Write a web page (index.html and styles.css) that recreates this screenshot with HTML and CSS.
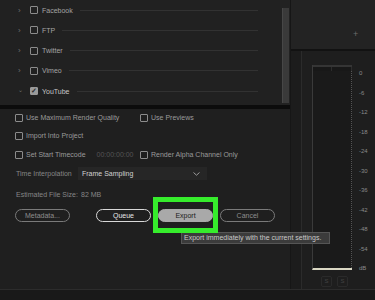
FILE: index.html
```html
<!DOCTYPE html>
<html lang="en">
<head>
    <meta charset="UTF-8">
    <meta name="viewport" content="width=device-width, initial-scale=1.0">
    <title>Export Settings</title>
    <link rel="stylesheet" href="styles.css">
</head>
<body>
    <div class="app">
        <div class="main">
            <!-- Publish destinations -->
            <div class="destinations">
                <ul class="tree">
                    <li class="tree-row"><span class="chev">&#8250;</span><span class="box"></span><span class="name">Facebook</span><span class="rule"></span></li>
                    <li class="tree-row"><span class="chev">&#8250;</span><span class="box"></span><span class="name">FTP</span><span class="rule"></span></li>
                    <li class="tree-row"><span class="chev">&#8250;</span><span class="box"></span><span class="name">Twitter</span><span class="rule"></span></li>
                    <li class="tree-row"><span class="chev">&#8250;</span><span class="box"></span><span class="name">Vimeo</span><span class="rule"></span></li>
                    <li class="tree-row open"><span class="chev">&#8964;</span><span class="box checked">&#10003;</span><span class="name">YouTube</span><span class="rule"></span></li>
                </ul>
                <div class="scrollbar"><div class="thumb"></div></div>
            </div>

            <div class="divider"></div>

            <!-- Render options -->
            <div class="settings">
                <div class="opt-row r1">
                    <label class="opt"><span class="box"></span>Use Maximum Render Quality</label>
                    <label class="opt"><span class="box"></span>Use Previews</label>
                </div>
                <div class="opt-row r2">
                    <label class="opt"><span class="box"></span>Import Into Project</label>
                </div>
                <div class="opt-row r3">
                    <label class="opt"><span class="box"></span>Set Start Timecode <span class="timecode">00:00:00:00</span></label>
                    <label class="opt"><span class="box"></span>Render Alpha Channel Only</label>
                </div>
                <div class="opt-row r4">
                    <span class="dim">Time Interpolation</span>
                    <div class="select">
                        <span>Frame Sampling</span>
                        <svg width="7" height="4" viewBox="0 0 7 4"><path d="M0.5 0.5 L3.5 3.2 L6.5 0.5" fill="none" stroke="#9a9a9a" stroke-width="1"/></svg>
                    </div>
                </div>
                <div class="opt-row r5">
                    <span class="dim">Estimated File Size:</span>
                    <span class="dim size">82 MB</span>
                </div>

                <div class="actions">
                    <button class="btn muted">Metadata...</button>
                    <button class="btn queue">Queue</button>
                    <div class="export-wrap">
                        <button class="btn export">Export</button>
                        <div class="highlight"></div>
                        <div class="tooltip">Export immediately with the current settings.</div>
                    </div>
                    <button class="btn muted">Cancel</button>
                </div>
            </div>
        </div>

        <!-- Audio meter side panel -->
        <div class="side">
            <div class="side-top"><span class="plus">+</span></div>
            <div class="side-meter">
                <div class="strip"></div>
                <div class="meter-col">
                    <div class="meter">
                        <div class="meter-head"><span></span><span></span></div>
                        <div class="meter-body"></div>
                    </div>
                    <div class="solo">
                        <span>S</span><span>S</span>
                    </div>
                </div>
                <div class="scale">
                    <span>0</span>
                    <span>-6</span>
                    <span>-12</span>
                    <span>-18</span>
                    <span>-24</span>
                    <span>-30</span>
                    <span>-36</span>
                    <span>-42</span>
                    <span>-48</span>
                    <span>-54</span>
                    <span>dB</span>
                </div>
            </div>
        </div>
    </div>
    <div class="footer"></div>
</body>
</html>
```

FILE: styles.css
```css
* {
    box-sizing: border-box;
}

body {
    margin: 0;
    width: 375px;
    height: 300px;
    overflow: hidden;
    background: #1f1f1f;
    font-family: 'Liberation Sans', Arial, sans-serif;
    font-size: 7px;
    color: #9c9c9c;
}

.app {
    display: flex;
    height: 289px;
}

.main {
    width: 290px;
    display: flex;
    flex-direction: column;
}

/* Destination tree */
.destinations {
    height: 105px;
    display: flex;
    background: #212121;
}

.tree {
    list-style: none;
    margin: 0;
    padding: 0;
    flex: 1;
}

.tree-row {
    height: 20.25px;
    display: flex;
    align-items: center;
}

.chev {
    width: 30px;
    padding-left: 18px;
    color: #6f6f6f;
    font-size: 8px;
}

.tree-row.open .chev {
    padding-left: 18px;
    font-size: 6px;
    margin-top: -3px;
}

.box {
    width: 8px;
    height: 8px;
    border: 1px solid #8c8c8c;
    border-radius: 1px;
    margin-right: 4px;
    flex: none;
    display: inline-flex;
    align-items: center;
    justify-content: center;
}

.box.checked {
    background: #9a9a9a;
    border-color: #9a9a9a;
    color: #2a2a2a;
    font-size: 7px;
    font-weight: bold;
}

.name {
    color: #a3a3a3;
}

.open .name {
    color: #c6c6c6;
}

.rule {
    flex: 1;
    height: 1px;
    background: #323232;
    margin: 0 22px 0 7px;
}

.scrollbar {
    width: 10px;
    padding: 8px 0 2px 2px;
    background: #222;
}

.thumb {
    height: 95px;
    width: 7px;
    background: #3a3a3a;
    border-left: 1px solid #474747;
}

.divider {
    height: 4px;
    background: #0c0c0c;
}

/* Settings */
.settings {
    flex: 1;
    padding-left: 15px;
    background: #1f1f1f;
}

.opt-row {
    display: flex;
    align-items: center;
}

.r1 { height: 17px; }
.r2 { height: 19px; }
.r3 { height: 19px; }
.r4 { height: 19px; }
.r5 { height: 22px; }

.opt {
    display: flex;
    align-items: center;
    color: #9a9a9a;
}

.opt .box {
    margin-right: 3px;
}

.opt:first-child {
    width: 125px;
}

.timecode {
    color: #555;
    margin-left: 11px;
}

.dim {
    color: #868686;
    width: 63px;
    padding-left: 1px;
}

.size {
    width: auto;
    padding-left: 3px;
}

.select {
    width: 129px;
    height: 13px;
    background: #262626;
    display: flex;
    align-items: center;
    justify-content: space-between;
    padding: 0 7px 0 4px;
    color: #d2d2d2;
}

.actions {
    display: flex;
    align-items: center;
    margin-top: 4px;
}

.btn {
    width: 55px;
    height: 13px;
    border-radius: 7px;
    border: 1px solid #7a7a7a;
    background: transparent;
    color: #8e8e8e;
    font-family: inherit;
    font-size: 7px;
    padding: 0;
}

.queue {
    margin-left: 26px;
    margin-right: 7px;
    border-color: #d8d8d8;
    color: #e6e6e6;
}

.export-wrap {
    position: relative;
    margin-right: 7px;
}

.export {
    display: block;
    background: #a9a9a9;
    border-color: #a9a9a9;
    color: #202020;
}

.highlight {
    position: absolute;
    top: -12px;
    bottom: -11px;
    left: -5px;
    right: -5px;
    border: 5px solid #36ec2c;
    z-index: 3;
}

.tooltip {
    position: absolute;
    top: 23px;
    left: 23px;
    width: 149px;
    height: 12px;
    line-height: 10px;
    padding-left: 2px;
    background: #3b3b3b;
    border: 1px solid #555;
    color: #c9c9c9;
    white-space: nowrap;
    z-index: 2;
}

/* Side panel */
.side {
    width: 85px;
    display: flex;
    flex-direction: column;
    border-left: 1px solid #161616;
}

.side-top {
    height: 51px;
    background: #232323;
    border-bottom: 2px solid #121212;
    position: relative;
}

.plus {
    position: absolute;
    left: 62px;
    top: 29px;
    color: #6c6c6c;
    font-size: 9px;
}

.side-meter {
    flex: 1;
    display: flex;
    background: #1e1e1e;
}

.strip {
    width: 11px;
    background: #1c1c1c;
    border-right: 1px solid #2b2b2b;
}

.meter-col {
    width: 51px;
    padding: 14px 0 0 10px;
}

.meter {
    width: 40px;
    height: 205px;
    display: flex;
    flex-direction: column;
    border-left: 1px solid #3a3a3a;
    border-bottom: 2px solid #d9d7c3;
}

.meter-head {
    display: flex;
    gap: 1px;
    height: 6px;
    border-top: 2px solid #353535;
    background: #181818;
}

.meter-head span {
    flex: 1;
    border-right: 1px solid #2c2c2c;
}

.meter-body {
    flex: 1;
    background: #1a1a1a;
    border-right: 1px dotted #555;
}

.solo {
    display: flex;
    gap: 5px;
    padding: 6px 0 0 9px;
}

.solo span {
    width: 11px;
    height: 11px;
    border: 1px solid #2a2a2a;
    border-radius: 2px;
    color: #444;
    font-size: 6px;
    text-align: center;
    line-height: 9px;
}

.scale {
    flex: 1;
    display: flex;
    flex-direction: column;
    padding-top: 13px;
    padding-left: 6px;
    color: #8a8a8a;
    font-size: 6px;
}

.scale span {
    height: 19.5px;
    line-height: 19.5px;
}

.footer {
    height: 11px;
    background: #191919;
    border-top: 1px solid #2c2c2c;
}
```
